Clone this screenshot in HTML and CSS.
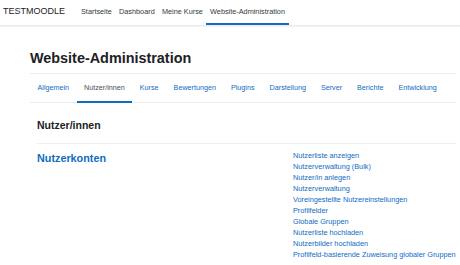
FILE: index.html
```html
<!DOCTYPE html>
<html lang="de">
<head>
<meta charset="utf-8">
<title>Website-Administration</title>
<link rel="stylesheet" href="styles.css">
</head>
<body>
<header class="navbar">
  <span class="brand">TESTMOODLE</span>
  <nav class="primary">
    <a href="#">Startseite</a>
    <a href="#">Dashboard</a>
    <a href="#">Meine Kurse</a>
    <a href="#" class="active">Website-Administration</a>
  </nav>
</header>
<main class="page">
  <div class="page-header">
    <h1>Website-Administration</h1>
  </div>
  <nav class="tabs">
    <a href="#">Allgemein</a>
    <a href="#" class="active">Nutzer/innen</a>
    <a href="#">Kurse</a>
    <a href="#">Bewertungen</a>
    <a href="#">Plugins</a>
    <a href="#">Darstellung</a>
    <a href="#">Server</a>
    <a href="#">Berichte</a>
    <a href="#">Entwicklung</a>
  </nav>
  <section class="content">
    <h2>Nutzer/innen</h2>
    <div class="category">
      <h3><a href="#">Nutzerkonten</a></h3>
      <ul class="links">
        <li><a href="#">Nutzerliste anzeigen</a></li>
        <li><a href="#">Nutzerverwaltung (Bulk)</a></li>
        <li><a href="#">Nutzer/in anlegen</a></li>
        <li><a href="#">Nutzerverwaltung</a></li>
        <li><a href="#">Voreingestellte Nutzereinstellungen</a></li>
        <li><a href="#">Profilfelder</a></li>
        <li><a href="#">Globale Gruppen</a></li>
        <li><a href="#">Nutzerliste hochladen</a></li>
        <li><a href="#">Nutzerbilder hochladen</a></li>
        <li><a href="#">Profilfeld-basierende Zuweisung globaler Gruppen</a></li>
      </ul>
    </div>
  </section>
</main>
</body>
</html>
```
FILE: styles.css
```css
html, body {
  margin: 0;
  padding: 0;
  background: #fff;
}
body {
  font-family: "Liberation Sans", Arial, sans-serif;
  color: #1d2125;
  overflow: hidden;
}
a {
  text-decoration: none;
}
.navbar {
  display: flex;
  align-items: flex-start;
  height: 25px;
  padding-left: 3px;
  border-bottom: 1px solid #ebebeb;
  box-shadow: 0 1px 1px #f4f4f4;
}
.brand {
  font-size: 9px;
  line-height: 22px;
  color: #1d2125;
  margin-right: 12.4px;
}
.primary {
  display: flex;
}
.primary a {
  display: block;
  height: 25px;
  box-sizing: border-box;
  font-size: 7.3px;
  line-height: 23px;
  padding: 0 3.6px;
  color: #343a40;
  border-bottom: 2px solid transparent;
}
.primary a.active {
  border-bottom-color: #0f6cbf;
}
.page {
  padding: 0 4px 0 30px;
}
.page-header {
  margin-top: 23.7px;
  padding-bottom: 6px;
  border-bottom: 1px solid #ececec;
}
h1 {
  margin: 0;
  font-size: 14.4px;
  line-height: 17.3px;
  font-weight: bold;
  color: #1d2125;
}
.tabs {
  display: flex;
  height: 28px;
  border-bottom: 1px solid #ececec;
}
.tabs a {
  display: block;
  font-size: 7.2px;
  line-height: 27px;
  padding: 0 7.5px;
  color: #0f6cbf;
  border-bottom: 2px solid transparent;
  margin-bottom: -1px;
}
.tabs a.active {
  color: #495057;
  border-bottom-color: #0f6cbf;
}
.content {
  padding-left: 7px;
}
h2 {
  margin: 15.6px 0 0;
  padding-bottom: 11.4px;
  font-size: 10.5px;
  line-height: 13px;
  font-weight: bold;
  border-bottom: 1px solid #efefef;
}
.category {
  display: grid;
  grid-template-columns: 256px 1fr;
  padding-top: 6.3px;
}
h3 {
  margin: 1.3px 0 0;
  font-size: 10.8px;
  line-height: 13px;
  font-weight: bold;
}
h3 a {
  color: #0f6cbf;
}
.links {
  list-style: none;
  margin: 0;
  padding: 0;
}
.links li {
  font-size: 7.3px;
  line-height: 11px;
}
.links a {
  color: #0f6cbf;
}
```
